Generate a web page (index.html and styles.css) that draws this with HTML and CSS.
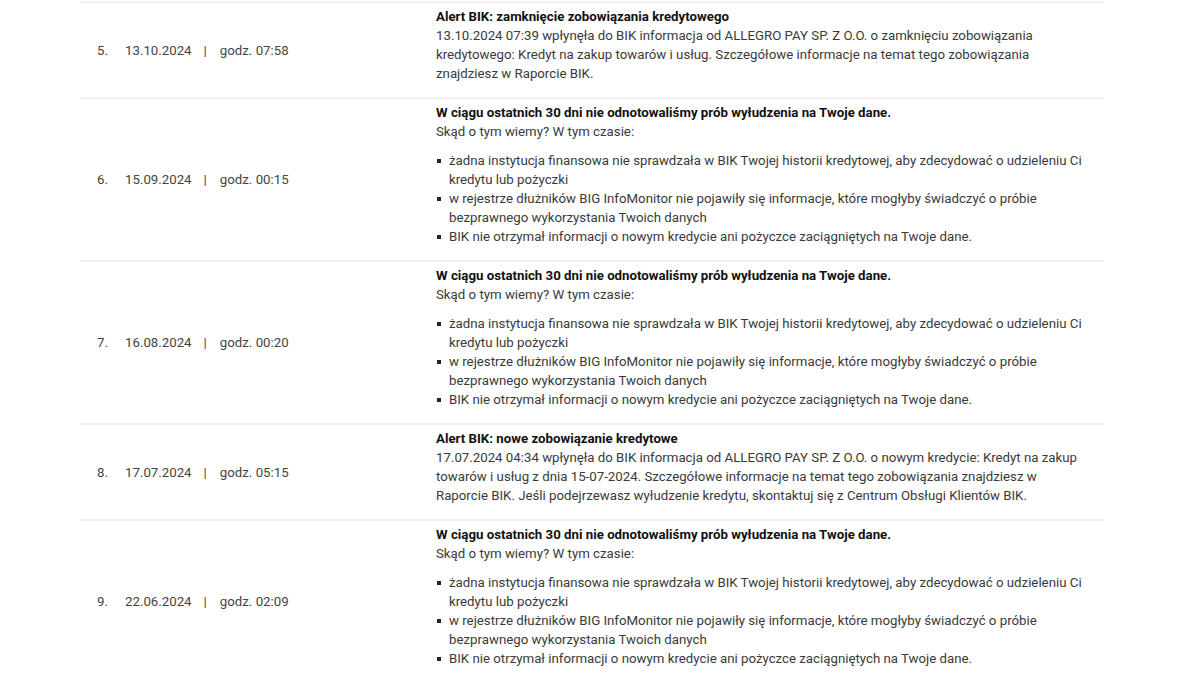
FILE: index.html
```html
<!DOCTYPE html>
<html lang="pl">
<head>
<meta charset="utf-8">
<link rel="stylesheet" href="styles.css">
</head>
<body>
<div class="table">
  <div class="row">
    <div class="when"><span class="num">5.</span><span class="date">13.10.2024</span><span class="sep">|</span><span class="time">godz. 07:58</span></div>
    <div class="msg">
      <div class="title">Alert BIK: zamknięcie zobowiązania kredytowego</div>
      <p class="text">13.10.2024 07:39 wpłynęła do BIK informacja od ALLEGRO PAY SP. Z O.O. o zamknięciu zobowiązania kredytowego: Kredyt na zakup towarów i usług. Szczegółowe informacje na temat tego zobowiązania znajdziesz w Raporcie BIK.</p>
    </div>
  </div>
  <div class="row">
    <div class="when"><span class="num">6.</span><span class="date">15.09.2024</span><span class="sep">|</span><span class="time">godz. 00:15</span></div>
    <div class="msg">
      <div class="title">W ciągu ostatnich 30 dni nie odnotowaliśmy prób wyłudzenia na Twoje dane.</div>
      <p class="text lead">Skąd o tym wiemy? W tym czasie:</p>
      <ul class="list">
        <li>żadna instytucja finansowa nie sprawdzała w BIK Twojej historii kredytowej, aby zdecydować o udzieleniu Ci kredytu lub pożyczki</li>
        <li>w rejestrze dłużników BIG InfoMonitor nie pojawiły się informacje, które mogłyby świadczyć o próbie bezprawnego wykorzystania Twoich danych</li>
        <li>BIK nie otrzymał informacji o nowym kredycie ani pożyczce zaciągniętych na Twoje dane.</li>
      </ul>
    </div>
  </div>
  <div class="row">
    <div class="when"><span class="num">7.</span><span class="date">16.08.2024</span><span class="sep">|</span><span class="time">godz. 00:20</span></div>
    <div class="msg">
      <div class="title">W ciągu ostatnich 30 dni nie odnotowaliśmy prób wyłudzenia na Twoje dane.</div>
      <p class="text lead">Skąd o tym wiemy? W tym czasie:</p>
      <ul class="list">
        <li>żadna instytucja finansowa nie sprawdzała w BIK Twojej historii kredytowej, aby zdecydować o udzieleniu Ci kredytu lub pożyczki</li>
        <li>w rejestrze dłużników BIG InfoMonitor nie pojawiły się informacje, które mogłyby świadczyć o próbie bezprawnego wykorzystania Twoich danych</li>
        <li>BIK nie otrzymał informacji o nowym kredycie ani pożyczce zaciągniętych na Twoje dane.</li>
      </ul>
    </div>
  </div>
  <div class="row">
    <div class="when"><span class="num">8.</span><span class="date">17.07.2024</span><span class="sep">|</span><span class="time">godz. 05:15</span></div>
    <div class="msg">
      <div class="title">Alert BIK: nowe zobowiązanie kredytowe</div>
      <p class="text">17.07.2024 04:34 wpłynęła do BIK informacja od ALLEGRO PAY SP. Z O.O. o nowym kredycie: Kredyt na zakup towarów i usług z dnia 15-07-2024. Szczegółowe informacje na temat tego zobowiązania znajdziesz w Raporcie BIK. Jeśli podejrzewasz wyłudzenie kredytu, skontaktuj się z Centrum Obsługi Klientów BIK.</p>
    </div>
  </div>
  <div class="row">
    <div class="when"><span class="num">9.</span><span class="date">22.06.2024</span><span class="sep">|</span><span class="time">godz. 02:09</span></div>
    <div class="msg">
      <div class="title">W ciągu ostatnich 30 dni nie odnotowaliśmy prób wyłudzenia na Twoje dane.</div>
      <p class="text lead">Skąd o tym wiemy? W tym czasie:</p>
      <ul class="list">
        <li>żadna instytucja finansowa nie sprawdzała w BIK Twojej historii kredytowej, aby zdecydować o udzieleniu Ci kredytu lub pożyczki</li>
        <li>w rejestrze dłużników BIG InfoMonitor nie pojawiły się informacje, które mogłyby świadczyć o próbie bezprawnego wykorzystania Twoich danych</li>
        <li>BIK nie otrzymał informacji o nowym kredycie ani pożyczce zaciągniętych na Twoje dane.</li>
      </ul>
    </div>
  </div>
</div>
</body>
</html>
```

FILE: styles.css
```css
* { box-sizing: border-box; }
html, body { margin: 0; padding: 0; background: #fff; }
body {
  font-family: Roboto, "Liberation Sans", sans-serif;
  font-size: 13.25px;
  color: #3a3a3a;
  overflow: hidden;
}
.table {
  width: 1024px;
  margin: 1px 0 0 80px;
}
.row {
  display: grid;
  grid-template-columns: 356px 1fr;
  border-top: 2px solid #f0f0f0;
}
.when {
  display: flex;
  align-items: center;
  padding-left: 17px;
  color: #444;
}
.num { width: 28px; }
.sep { margin: 0 13px 0 12px; }
.msg {
  padding: 4px 16px 14px 0;
  line-height: 19px;
}
.title {
  font-weight: 700;
  color: #111;
}
.text { margin: 0; }
.lead { margin-bottom: 10px; }
.list {
  list-style: none;
  margin: 0;
  padding: 0;
}
.list li {
  position: relative;
  padding-left: 13px;
}
.list li::before {
  content: "";
  position: absolute;
  left: 1px;
  top: 8px;
  width: 4px;
  height: 4px;
  background: #222;
}
```
